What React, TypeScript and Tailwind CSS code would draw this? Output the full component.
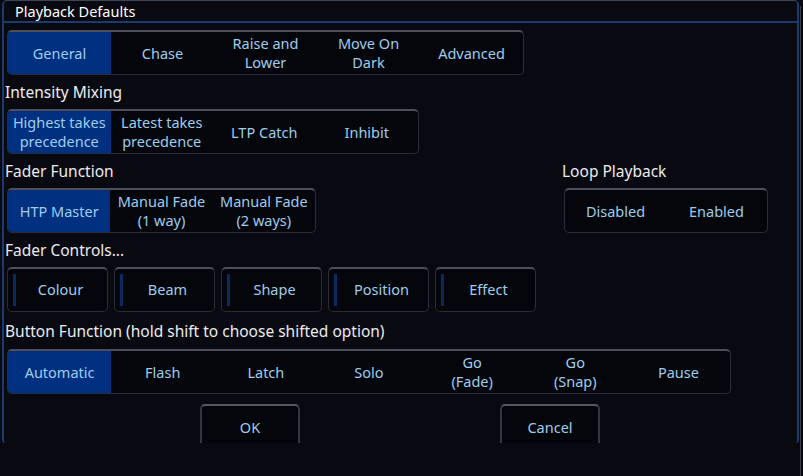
import React from "react";

const tabs = ["General", "Chase", "Raise and\nLower", "Move On\nDark", "Advanced"];
const mixing = ["Highest takes\nprecedence", "Latest takes\nprecedence", "LTP Catch", "Inhibit"];
const faderFunction = ["HTP Master", "Manual Fade\n(1 way)", "Manual Fade\n(2 ways)"];
const loop = ["Disabled", "Enabled"];
const faderControls = ["Colour", "Beam", "Shape", "Position", "Effect"];
const buttonFunction = ["Automatic", "Flash", "Latch", "Solo", "Go\n(Fade)", "Go\n(Snap)", "Pause"];

function Segmented({
  items,
  selected,
  width,
  cols,
}: {
  items: string[];
  selected: number;
  width: string;
  cols: string;
}) {
  return (
    <div
      className={`${width} ${cols} grid h-[45px] rounded-[5px] border border-[#2b2d34] border-t-2 border-t-[#4d5057] bg-[#05060b] overflow-hidden`}
    >
      {items.map((item, i) => (
        <div
          key={i}
          className={`flex items-center justify-center text-center whitespace-pre-line leading-[19px] text-[14.5px] text-[#9fcdec] ${
            i === selected ? "bg-[#00307f]" : ""
          }`}
        >
          {item}
        </div>
      ))}
    </div>
  );
}

function Heading({ children }: { children: React.ReactNode }) {
  return <div className="h-[20px] pl-[1px] text-[15.5px] leading-[21px] text-[#ececec]">{children}</div>;
}

export default function App() {
  return (
    <div
      className="relative w-[803px] h-[476px] bg-[#080911] overflow-hidden"
      style={{ fontFamily: '"Noto Sans", "Open Sans", sans-serif' }}
    >
      <div className="ml-[2px] w-[797px] h-[443px] flex flex-col overflow-hidden rounded-t-[5px] rounded-b-[3px] border-x-2 border-t border-x-[#1b3a6e] border-t-[#3a4656] bg-[#080911]">
        <div className="h-[22px] shrink-0 border-b-2 border-[#1b3a6e] pl-[11px] text-[14.5px] leading-[20px] text-white">
          Playback Defaults
        </div>

        <div className="flex flex-col">
          <div className="mt-[7px] ml-[3px]">
            <Segmented items={tabs} selected={0} width="w-[517px]" cols="grid-cols-5" />
          </div>

          <div className="mt-[7px]">
            <Heading>Intensity Mixing</Heading>
          </div>
          <div className="mt-[7px] ml-[3px]">
            <Segmented items={mixing} selected={0} width="w-[412px]" cols="grid-cols-4" />
          </div>

          <div className="flex">
            <div className="w-[557px]">
              <div className="mt-[7px]">
                <Heading>Fader Function</Heading>
              </div>
              <div className="mt-[7px] ml-[3px]">
                <Segmented items={faderFunction} selected={0} width="w-[309px]" cols="grid-cols-3" />
              </div>
            </div>
            <div>
              <div className="mt-[7px]">
                <Heading>Loop Playback</Heading>
              </div>
              <div className="mt-[7px] ml-[3px]">
                <Segmented items={loop} selected={-1} width="w-[204px]" cols="grid-cols-2" />
              </div>
            </div>
          </div>

          <div className="mt-[7px]">
            <Heading>Fader Controls...</Heading>
          </div>
          <div className="mt-[7px] ml-[3px] flex gap-[6px]">
            {faderControls.map((name) => (
              <div
                key={name}
                className="relative flex h-[45px] w-[101px] items-center justify-center rounded-[5px] border border-[#2b2d34] border-t-2 border-t-[#4d5057] bg-[#05060b] pl-[6px] text-[14.5px] text-[#9fcdec]"
              >
                <span className="absolute left-[5px] top-[5px] bottom-[5px] w-[3px] bg-[#0c2a5e]" />
                {name}
              </div>
            ))}
          </div>

          <div className="mt-[9px]">
            <Heading>Button Function (hold shift to choose shifted option)</Heading>
          </div>
          <div className="mt-[8px] ml-[3px]">
            <Segmented items={buttonFunction} selected={0} width="w-[724px]" cols="grid-cols-7" />
          </div>

          <div className="mt-[10px] ml-[196px] flex gap-[200px]">
            {["OK", "Cancel"].map((label) => (
              <div
                key={label}
                className="flex h-[45px] w-[100px] items-center justify-center rounded-t-[5px] border-x-2 border-t-2 border-x-[#34363d] border-t-[#55585f] bg-[#05060b] text-[14.5px] text-[#9fcdec]"
              >
                {label}
              </div>
            ))}
          </div>
        </div>
      </div>
      <div className="absolute right-[2px] top-[6px] bottom-0 w-[1px] bg-[#3a3c42]" />
    </div>
  );
}
